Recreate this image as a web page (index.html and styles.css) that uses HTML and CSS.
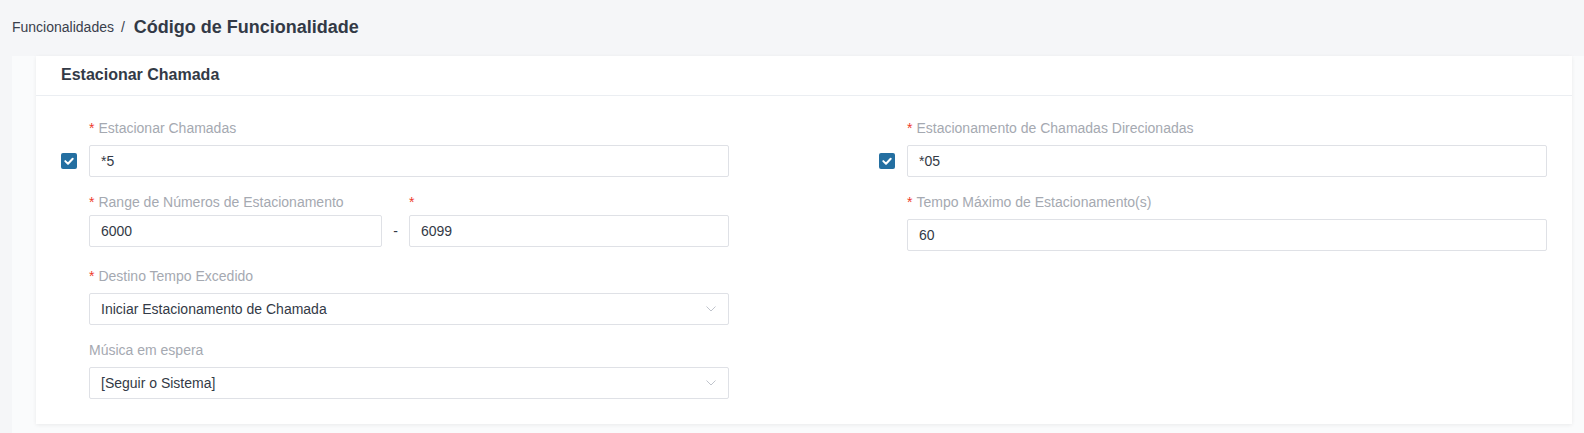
FILE: index.html
```html
<!DOCTYPE html>
<html lang="pt">
<head>
	<meta charset="UTF-8">
	<title>Código de Funcionalidade</title>
	<link rel="stylesheet" href="styles.css">
</head>
<body>
	<div class="topbar">
		<span class="crumb">Funcionalidades</span>
		<span class="sep">/</span>
		<span class="crumb-current">Código de Funcionalidade</span>
	</div>
	<div class="content">
		<div class="card">
			<div class="card-head">Estacionar Chamada</div>
			<div class="card-body">
				<!-- coluna esquerda -->
				<div class="col">
					<div class="field">
						<div class="label"><span class="req">*</span>Estacionar Chamadas</div>
						<div class="check-row">
							<svg class="check" width="16" height="16" viewBox="0 0 16 16"><rect width="16" height="16" rx="2" fill="#246fa1"/><path d="M4.3 8.1 L7 10.7 L11.7 5.7" fill="none" stroke="#fff" stroke-width="2" stroke-linecap="round" stroke-linejoin="round"/></svg>
							<div class="input">*5</div>
						</div>
					</div>
					<div class="field range">
						<div class="range-labels">
							<div class="label"><span class="req">*</span>Range de Números de Estacionamento</div>
							<div></div>
							<div class="label"><span class="req">*</span></div>
						</div>
						<div class="range-inputs">
							<div class="input">6000</div>
							<div class="dash">-</div>
							<div class="input">6099</div>
						</div>
					</div>
					<div class="field">
						<div class="label"><span class="req">*</span>Destino Tempo Excedido</div>
						<div class="input select">
							<span>Iniciar Estacionamento de Chamada</span>
							<svg width="10" height="6" viewBox="0 0 10 6"><polyline points="0.5,0.5 5,5 9.5,0.5" fill="none" stroke="#c0c4cc" stroke-width="1"/></svg>
						</div>
					</div>
					<div class="field">
						<div class="label">Música em espera</div>
						<div class="input select">
							<span>[Seguir o Sistema]</span>
							<svg width="10" height="6" viewBox="0 0 10 6"><polyline points="0.5,0.5 5,5 9.5,0.5" fill="none" stroke="#c0c4cc" stroke-width="1"/></svg>
						</div>
					</div>
				</div>
				<!-- coluna direita -->
				<div class="col">
					<div class="field">
						<div class="label"><span class="req">*</span>Estacionamento de Chamadas Direcionadas</div>
						<div class="check-row">
							<svg class="check" width="16" height="16" viewBox="0 0 16 16"><rect width="16" height="16" rx="2" fill="#246fa1"/><path d="M4.3 8.1 L7 10.7 L11.7 5.7" fill="none" stroke="#fff" stroke-width="2" stroke-linecap="round" stroke-linejoin="round"/></svg>
							<div class="input">*05</div>
						</div>
					</div>
					<div class="field">
						<div class="label"><span class="req">*</span>Tempo Máximo de Estacionamento(s)</div>
						<div class="input">60</div>
					</div>
				</div>
			</div>
		</div>
	</div>
</body>
</html>
```

FILE: styles.css
```css
html,body{
	margin:0;
	padding:0;
	height:100%;
}
body{
	background:#f5f6f8;
	font-family:"Liberation Sans",Arial,sans-serif;
	color:#333a46;
	display:flex;
	flex-direction:column;
}
.topbar{
	height:56px;
	padding:0 0 2px 12px;
	box-sizing:border-box;
	display:flex;
	align-items:center;
}
.crumb{
	font-size:14px;
	color:#3a404c;
}
.sep{
	font-size:14px;
	color:#3a404c;
	margin:0 9px 0 7px;
}
.crumb-current{
	font-size:18px;
	font-weight:bold;
	color:#333a46;
}
.content{
	flex:1;
	margin-left:12px;
	padding:0 12px 0 24px;
	background:#fafbfc;
}
.card{
	background:#fff;
	box-shadow:0 1px 4px rgba(0,0,0,0.07);
}
.card-head{
	height:39px;
	line-height:37px;
	padding-left:25px;
	font-size:16px;
	font-weight:bold;
	color:#333a46;
	border-bottom:1px solid #ebeef2;
}
.card-body{
	padding:22px 25px 25px 25px;
	display:flex;
	justify-content:space-between;
}
.col{
	width:668px;
	display:flex;
	flex-direction:column;
}
.field{
	padding-left:28px;
	margin-bottom:15px;
}
.field:last-child{
	margin-bottom:0;
}
.label{
	height:20px;
	line-height:20px;
	font-size:14px;
	color:#a5a9b1;
	margin-bottom:7px;
	white-space:nowrap;
}
.req{
	color:#ee3b2b;
	margin-right:4px;
}
.input{
	height:32px;
	box-sizing:border-box;
	border:1px solid #dfe1e6;
	border-radius:2px;
	padding:0 12px 0 11px;
	font-size:14px;
	line-height:30px;
	color:#333a46;
}
.check-row{
	display:flex;
	align-items:center;
	margin-left:-28px;
	gap:12px;
}
.check-row .input{
	flex:1;
}
.check{
	display:block;
	flex:none;
}
.range-labels,.range-inputs{
	display:grid;
	grid-template-columns:293px 27px 1fr;
}
.range .label{
	margin-bottom:3px;
}
.range-inputs{
	margin-bottom:4px;
}
.dash{
	text-align:center;
	line-height:32px;
	font-size:14px;
	color:#333a46;
}
.select{
	display:flex;
	justify-content:space-between;
	align-items:center;
}
.select svg{
	display:block;
}
```
